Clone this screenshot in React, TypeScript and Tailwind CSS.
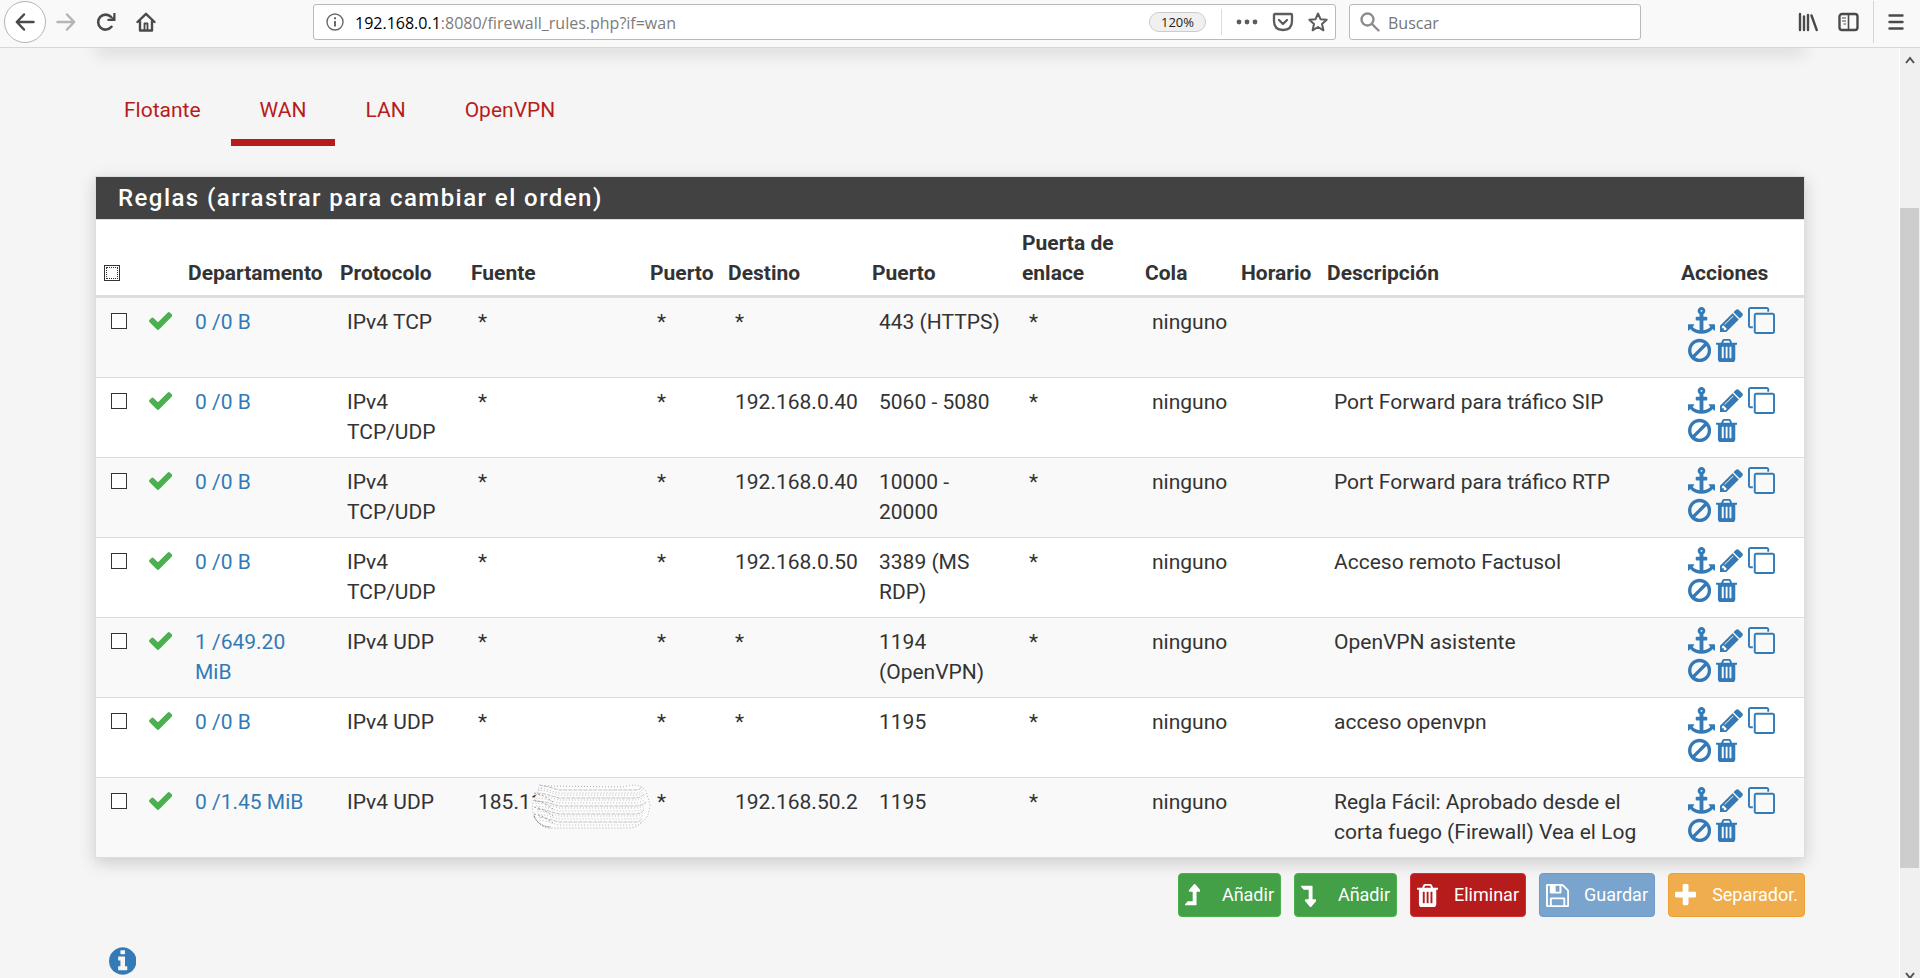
import React from "react";

type Shape = { x: number; w: number; d: string };

const shapes = {
  anchor: { x: 0, w: 1792, d: "M960 256q0-26-19-45t-45-19-45 19-19 45 19 45 45 19 45-19 19-45zm832 928v352q0 22-20 30-8 2-12 2-13 0-23-9l-93-93q-119 143-318.500 226.500t-429.500 83.500-429.500-83.500-318.500-226.500l-93 93q-9 9-23 9-4 0-12-2-20-8-20-30v-352q0-14 9-23t23-9h352q22 0 30 20 8 19-7 35l-100 100q67 91 189.500 153.500t271.500 82.500v-647h-192q-26 0-45-19t-19-45v-128q0-26 19-45t45-19h192v-163q-58-34-93-92.500t-35-128.500q0-106 75-181t181-75 181 75 75 181q0 70-35 128.500t-93 92.500v163h192q26 0 45 19t19 45v128q0 26-19 45t-45 19h-192v647q149-20 271.500-82.500t189.500-153.500l-100-100q-15-16-7-35 8-20 30-20h352q14 0 23 9t9 23z" },
  pencil: { x: 128, w: 1536, d: "M491 1536l91-91-235-235-91 91v107h128v128h107zm523-928q0-22-22-22-10 0-17 7l-542 542q-7 7-7 17 0 22 22 22 10 0 17-7l542-542q7-7 7-17zm-54-192l416 416-832 832h-416v-416zm683 96q0 53-37 90l-166 166-416-416 166-165q36-38 90-38 53 0 91 38l235 234q37 39 37 91z" },
  clone: { x: 0, w: 1792, d: "M1664 1632v-1088q0-13-9.500-22.500t-22.500-9.500h-1088q-13 0-22.500 9.500t-9.500 22.500v1088q0 13 9.500 22.500t22.500 9.500h1088q13 0 22.500-9.500t9.500-22.500zm128-1088v1088q0 66-47 113t-113 47h-1088q-66 0-113-47t-47-113v-1088q0-66 47-113t113-47h1088q66 0 113 47t47 113zm-384-384v160h-128v-160q0-13-9.500-22.500t-22.500-9.500h-1088q-13 0-22.500 9.500t-9.500 22.500v1088q0 13 9.500 22.500t22.500 9.500h160v128h-160q-66 0-113-47t-47-113v-1088q0-66 47-113t113-47h1088q66 0 113 47t47 113z" },
  ban: { x: 128, w: 1536, d: "M1440 893q0-161-87-295l-754 753q137 89 297 89 111 0 211.500-43.500t173.500-116.500 116-174.500 43-212.500zm-999 299l755-754q-135-91-300-91-148 0-273 73t-198 199-73 274q0 162 89 299zm1223-299q0 157-61 300t-163.500 246-245 164-298.500 61-298.500-61-245-164-163.500-246-61-300 61-299.500 163.500-245.500 245-164 298.500-61 298.500 61 245 164 163.500 245.500 61 299.500z" },
  trash: { x: 192, w: 1408, d: "M704 1376v-704q0-14-9-23t-23-9h-64q-14 0-23 9t-9 23v704q0 14 9 23t23 9h64q14 0 23-9t9-23zm256 0v-704q0-14-9-23t-23-9h-64q-14 0-23 9t-9 23v704q0 14 9 23t23 9h64q14 0 23-9t9-23zm256 0v-704q0-14-9-23t-23-9h-64q-14 0-23 9t-9 23v704q0 14 9 23t23 9h64q14 0 23-9t9-23zm-544-992h448l-48-117q-7-9-17-11h-317q-10 2-17 11zm928 32v64q0 14-9 23t-23 9h-96v948q0 83-47 143.500t-113 60.500h-832q-66 0-113-58.500t-47-141.500v-952h-96q-14 0-23-9t-9-23v-64q0-14 9-23t23-9h309l70-167q15-37 54-63t79-26h320q40 0 79 26t54 63l70 167h309q14 0 23 9t9 23z" },
  check: { x: 121, w: 1550, d: "M1671 566q0 40-28 68l-724 724-136 136q-28 28-68 28t-68-28l-136-136-362-362q-28-28-28-68t28-68l136-136q28-28 68-28t68 28l294 295 656-657q28-28 68-28t68 28l136 136q28 28 28 68z" },
  plus: { x: 192, w: 1408, d: "M1600 736v192q0 40-28 68t-68 28h-416v416q0 40-28 68t-68 28h-192q-40 0-68-28t-28-68v-416h-416q-40 0-68-28t-28-68v-192q0-40 28-68t68-28h416v-416q0-40 28-68t68-28h192q40 0 68 28t28 68v416h416q40 0 68 28t28 68z" },
  save: { x: 128, w: 1536, d: "M512 1536h768v-384h-768v384zm896 0h128v-896q0-14-10-38.500t-20-34.500l-281-281q-10-10-34-20t-39-10v416q0 40-28 68t-68 28h-576q-40 0-68-28t-28-68v-416h-128v1280h128v-416q0-40 28-68t68-28h832q40 0 68 28t28 68v416zm-384-928v-320q0-13-9.500-22.500t-22.500-9.500h-192q-13 0-22.500 9.500t-9.500 22.500v320q0 13 9.500 22.500t22.500 9.500h192q13 0 22.500-9.500t9.500-22.500zm640 32v928q0 40-28 68t-68 28h-1344q-40 0-68-28t-28-68v-1344q0-40 28-68t68-28h928q40 0 88 20t76 48l280 280q28 28 48 76t20 88z" },
  up: { x: 384, w: 1024, d: "M1400 603q-18 37-58 37h-192v864q0 14-9 23t-23 9h-704q-21 0-29-18-8-20 4-35l160-192q9-11 25-11h320v-640h-192q-40 0-58-37-17-37 9-68l320-384q18-22 49-22t49 22l320 384q27 32 9 68z" },
  down: { x: 384, w: 1024, d: "M414 256h704q14 0 23 9t9 23v864h192q40 0 58 37t-9 69l-320 384q-18 22-49 22t-49-22l-320-384q-26-31-9-69 18-37 58-37h192v-640h-320q-14 0-25-11l-160-192q-13-14-4-34 9-19 29-19z" },
  info: { x: 128, w: 1536, d: "M1152 1376v-160q0-14-9-23t-23-9h-96v-512q0-14-9-23t-23-9h-320q-14 0-23 9t-9 23v160q0 14 9 23t23 9h96v320h-96q-14 0-23 9t-9 23v160q0 14 9 23t23 9h448q14 0 23-9t9-23zm-128-896v-160q0-14-9-23t-23-9h-192q-14 0-23 9t-9 23v160q0 14 9 23t23 9h192q14 0 23-9t9-23zm640 416q0 209-103 385.500t-279.500 279.500-385.500 103-385.500-103-279.500-279.500-103-385.500 103-385.500 279.500-279.500 385.500-103 385.500 103 279.500 279.500 103 385.500z" },
} satisfies Record<string, Shape>;

type IconName = keyof typeof shapes;

function Icon({ name, className = "h-[27px]" }: { name: IconName; className?: string }) {
  const s = shapes[name];
  return (
    <svg viewBox={`${s.x} 0 ${s.w} 1792`} className={`${className} w-auto shrink-0 fill-current`} aria-hidden="true">
      <path d={s.d} />
    </svg>
  );
}

type Rule = {
  states: string;
  protocol: string;
  source: string;
  destination: string;
  port: string;
  description: string;
  masked?: boolean;
};

const rules: Rule[] = [
  { states: "0 /0 B", protocol: "IPv4 TCP", source: "*", destination: "*", port: "443 (HTTPS)", description: "" },
  { states: "0 /0 B", protocol: "IPv4\nTCP/UDP", source: "*", destination: "192.168.0.40", port: "5060 - 5080", description: "Port Forward para tráfico SIP" },
  { states: "0 /0 B", protocol: "IPv4\nTCP/UDP", source: "*", destination: "192.168.0.40", port: "10000 -\n20000", description: "Port Forward para tráfico RTP" },
  { states: "0 /0 B", protocol: "IPv4\nTCP/UDP", source: "*", destination: "192.168.0.50", port: "3389 (MS\nRDP)", description: "Acceso remoto Factusol" },
  { states: "1 /649.20\nMiB", protocol: "IPv4 UDP", source: "*", destination: "*", port: "1194\n(OpenVPN)", description: "OpenVPN asistente" },
  { states: "0 /0 B", protocol: "IPv4 UDP", source: "*", destination: "*", port: "1195", description: "acceso openvpn" },
  { states: "0 /1.45 MiB", protocol: "IPv4 UDP", source: "185.11", destination: "192.168.50.2", port: "1195", description: "Regla Fácil: Aprobado desde el corta fuego (Firewall) Vea el Log", masked: true },
];

const tabs = ["Flotante", "WAN", "LAN", "OpenVPN"];

function Scribble() {
  const rows = [7, 10, 12, 15, 17, 20, 23, 25, 28, 31, 33, 36, 39, 42];
  return (
    <svg viewBox="0 0 120 46" className="absolute -top-1 left-[53px] h-[46px] w-[120px]" fill="none" aria-hidden="true">
      <path d="M14 3 L92 3 Q108 -1 115 8 L119 22 Q118 34 112 38 Q106 45 98 45 L16 45 Q6 42 2 30 Q0 22 4 14 Q7 6 14 3Z" fill="#fcfcfc" />
      <path d="M14 3 L92 4 Q108 -1 115 8 L119 22 Q118 34 112 38 Q106 45 98 45 L16 45 Q6 42 2 30 Q0 22 4 14 Q7 6 14 3Z" stroke="#aaa" strokeDasharray="1 2" />
      {rows.map((y, i) => (
        <path
          key={y}
          d={`M${4 + Math.abs(y - 23) / 4} ${y - 5} L14 ${y - 4} L28 ${y} H104 Q110 ${y} ${115 - Math.abs(y - 23) / 4} ${y - 4}`}
          stroke={i % 3 === 0 ? "#c0c0c0" : "#bdbdbd"}
          strokeDasharray={i % 3 === 0 ? "4 1" : "1 2"}
        />
      ))}
      {[10, 17, 24, 31].map((y) => (
        <path key={y} d={`M3 ${y} L11 ${y + 2} L22 ${y + 9}`} stroke="#a0a0a0" strokeDasharray="2 2" />
      ))}
      <path d="M3 33 Q8 44 20 44" stroke="#777" strokeDasharray="2 1" />
    </svg>
  );
}

const box = "block size-4 appearance-none border border-[#333] bg-white";
const cell = "border-b border-[#ddd] pt-[9px] pl-[15px] align-top whitespace-pre-line";
const head = "border-b-[3px] border-[#ddd] pt-2 pb-[7px] pl-2 text-left align-bottom font-bold";

function RuleRow({ rule, index }: { rule: Rule; index: number }) {
  return (
    <tr className="h-20 odd:bg-[#f9f9f9] even:bg-white">
      <td className={cell}>
        <label className="flex h-7 items-center">
          <input type="checkbox" className={box} aria-label={`Seleccionar regla ${index + 1}`} />
        </label>
      </td>
      <td className={cell}>
        <span className="flex h-[26px] items-center text-[#4caf50]">
          <Icon name="check" />
        </span>
      </td>
      <td className={cell}>
        <a href="#estados" className="text-[#337ab7]">{rule.states}</a>
      </td>
      <td className={cell}>{rule.protocol}</td>
      <td className={cell}>
        <div className="relative">
          {rule.source}
          {rule.masked && <Scribble />}
        </div>
      </td>
      <td className={cell}>*</td>
      <td className={cell}>{rule.destination}</td>
      <td className={cell}>{rule.port}</td>
      <td className={cell}>*</td>
      <td className={cell}>ninguno</td>
      <td className={cell} />
      <td className={`${cell} pr-2`}>{rule.description}</td>
      <td className={`${cell} text-[#337ab7]`}>
        <div className="grid gap-1">
          <div className="flex h-[26px] items-center gap-[5px]">
            <a href="#mover" aria-label="Mover"><Icon name="anchor" /></a>
            <a href="#editar" aria-label="Editar"><Icon name="pencil" /></a>
            <a href="#copiar" aria-label="Copiar"><Icon name="clone" /></a>
          </div>
          <div className="flex h-[26px] items-center gap-[5px]">
            <a href="#deshabilitar" aria-label="Deshabilitar"><Icon name="ban" /></a>
            <a href="#borrar" aria-label="Borrar"><Icon name="trash" /></a>
          </div>
        </div>
      </td>
    </tr>
  );
}

function Toolbar() {
  const line = "fill-none stroke-current";
  return (
    <header className="flex h-12 items-center border-b border-[#d8d8d8] bg-[#f9f9fa] pb-1 pl-1 text-[#4a4a4b]">
      <button aria-label="Atrás" className="flex size-[42px] items-center justify-center rounded-full border border-[#b5b5b5] bg-white">
        <svg viewBox="0 0 20 20" className={`size-5 ${line}`} strokeWidth="2.500" strokeLinecap="round" strokeLinejoin="round"><path d="M18.500 10H2M9 2.500L1.800 10L9 17.500" /></svg>
      </button>
      <button aria-label="Adelante" className="flex w-10 justify-center text-[#b5b5b6]">
        <svg viewBox="0 0 20 20" className={`size-5 ${line}`} strokeWidth="2.500" strokeLinecap="round" strokeLinejoin="round"><path d="M1.500 10H18M11 2.500L18.200 10L11 17.500" /></svg>
      </button>
      <button aria-label="Recargar" className="flex w-10 justify-center">
        <svg viewBox="0 0 20 20" className={`size-5 ${line}`} strokeWidth="2.600"><path d="M15.500 14.800A7.500 7.500 0 1 1 15 4.800" strokeLinecap="round" /><path d="M19.500 1V9H11.500V6.800H15L17.300 4.500V1Z" className="fill-current stroke-none" /></svg>
      </button>
      <button aria-label="Inicio" className="flex w-10 justify-center">
        <svg viewBox="0 0 20 20" className={`size-5 ${line}`} strokeWidth="2.400" strokeLinejoin="round" strokeLinecap="round"><path d="M1.500 10L10 1.800L18.500 10M4 9V18.500H16V9" /><path d="M8.500 18V11.500H11.500V18" strokeWidth="1.800" /></svg>
      </button>
      <div className="w-[147px]" />
      <div className="flex h-9 min-w-0 flex-1 items-center rounded-[3px] border border-[#b9b9b9] bg-white pr-[7px] pl-3">
        <svg viewBox="0 0 18 18" className={`size-[18px] text-[#6a6a6a] ${line}`} strokeWidth="1.400"><circle cx="9" cy="9" r="8" /><path d="M9 8V13.500M9 4.300V6.300" strokeWidth="2" /></svg>
        <a href="#direccion" className="ml-[11px] flex-1 pt-[3px] font-['Open_Sans',sans-serif] text-base text-[#7c7c7c]">
          <span className="text-black">192.168.0.1</span>:8080/firewall_rules.php?if=wan
        </a>
        <button className="h-5 w-[57px] rounded-full border border-[#ccc] bg-[#f0f0f0] font-['Open_Sans',sans-serif] text-[13px] leading-4 text-[#222]">120%</button>
        <div className="mr-[14px] ml-[15px] h-[26px] w-px bg-[#dcdcdc]" />
        <div className="flex items-center gap-[14px] text-[#5c5c5d]">
          <button aria-label="Acciones de página"><svg viewBox="0 0 22 20" className="h-5 w-[22px] fill-current"><circle cx="3" cy="10" r="2.400" /><circle cx="11" cy="10" r="2.400" /><circle cx="19" cy="10" r="2.400" /></svg></button>
          <button aria-label="Pocket"><svg viewBox="0 0 22 20" className={`h-5 w-[22px] ${line}`} strokeWidth="2.300" strokeLinejoin="round" strokeLinecap="round"><path d="M3 2H19Q20 2 20 3V9Q20 18 11 18Q2 18 2 9V3Q2 2 3 2Z" /><path d="M7 8L11 12L15 8" /></svg></button>
          <button aria-label="Marcador"><svg viewBox="0 0 20 20" className={`size-5 ${line}`} strokeWidth="2" strokeLinejoin="round"><path d="M10 1.500L12.500 7.200L18.700 7.800L14 12L15.400 18.300L10 15L4.600 18.300L6 12L1.300 7.800L7.500 7.200Z" /></svg></button>
        </div>
      </div>
      <div className="ml-[13px] flex h-9 w-[292px] items-center rounded-[3px] border border-[#b9b9b9] bg-white px-[10px]">
        <svg viewBox="0 0 20 20" className={`size-5 text-[#8c8c8c] ${line}`} strokeWidth="2.400" strokeLinecap="round"><circle cx="7.500" cy="7.500" r="6" /><path d="M12 12L18.500 18.500" /></svg>
        <input aria-label="Buscar" placeholder="Buscar" className="ml-2 min-w-0 flex-1 pt-[3px] font-['Open_Sans',sans-serif] text-base outline-none placeholder:text-[#757575]" />
      </div>
      <div className="w-[157px]" />
      <button aria-label="Biblioteca" className="mr-5"><svg viewBox="0 0 20 20" className={`size-5 ${line}`} strokeWidth="2.400" strokeLinecap="round"><path d="M2 2V18M6 4.500V18M10 3V18M13.500 3.500L18.700 18" /></svg></button>
      <button aria-label="Barra lateral"><svg viewBox="0 0 21 20" className={`h-5 w-[21px] ${line}`} strokeWidth="2.400"><rect x="1.500" y="2" width="18" height="16" rx="2.500" /><path d="M10.500 2V18" strokeWidth="1.600" /><path d="M4 6H8M4 9H8M5.500 12H8" strokeWidth="1.200" /></svg></button>
      <div className="mx-[14px] h-[42px] w-px bg-[#d5d5d5]" />
      <button aria-label="Menú" className="mr-4 w-[16px]"><svg viewBox="0 0 16 18" className={`h-[18px] w-4 ${line}`} strokeWidth="2.400" strokeLinecap="round"><path d="M1.500 2.500H14.500M1.500 9H14.500M1.500 15.500H14.500" /></svg></button>
    </header>
  );
}

function ActionButton({ icon, label, tone }: { icon: IconName; label: string; tone: string }) {
  return (
    <button className={`flex h-11 items-center justify-between rounded border px-[6px] text-lg text-white ${tone}`}>
      <Icon name={icon} />
      {label}
    </button>
  );
}

export default function App() {
  return (
    <div className="flex min-h-screen flex-col bg-[#f5f5f5] font-[Roboto,sans-serif] text-[21px] leading-[30px] text-[#333]">
      <Toolbar />
      <div className="flex flex-1">
        <main className="min-w-0 flex-1 overflow-hidden pr-[94px] pl-[95px]">
          <div className="-mt-2 h-2 shadow-[0_5px_16px_rgba(0,0,0,0.17)]" />
          <nav className="mt-[47px] flex gap-px">
            {tabs.map((tab) => (
              <a
                key={tab}
                href={`#${tab}`}
                className={`border-b-[7px] px-[29px] pb-[14px] text-[#b71c1c] ${tab === "WAN" ? "border-[#b71c1c]" : "border-transparent"}`}
              >
                {tab}
              </a>
            ))}
          </nav>
          <section className="mt-[30px] border border-b-0 border-[#ddd] bg-white shadow-[0_5px_16px_rgba(0,0,0,0.17)]">
            <h2 className="border-b border-[#ddd] bg-[#424242] py-[6px] pl-[22px] text-2xl leading-[30px] font-medium tracking-[0.06em] text-white">
              Reglas (arrastrar para cambiar el orden)
            </h2>
            <table className="w-full table-fixed border-separate border-spacing-0">
              <colgroup>
                <col className="w-[38px]" />
                <col className="w-[46px]" />
                <col className="w-[152px]" />
                <col className="w-[131px]" />
                <col className="w-[179px]" />
                <col className="w-[78px]" />
                <col className="w-[144px]" />
                <col className="w-[150px]" />
                <col className="w-[123px]" />
                <col className="w-[96px]" />
                <col className="w-[86px]" />
                <col />
                <col className="w-[131px]" />
              </colgroup>
              <thead>
                <tr>
                  <th className={head}>
                    <label className="flex h-[30px] items-center">
                      <input
                        type="checkbox"
                        aria-label="Seleccionar todas"
                        className="block size-4 appearance-none border border-[#333] bg-white outline-1 -outline-offset-3 outline-dotted outline-[#333]"
                      />
                    </label>
                  </th>
                  <th className={head} />
                  <th className={head}>Departamento</th>
                  <th className={head}>Protocolo</th>
                  <th className={head}>Fuente</th>
                  <th className={head}>Puerto</th>
                  <th className={head}>Destino</th>
                  <th className={head}>Puerto</th>
                  <th className={head}>Puerta de enlace</th>
                  <th className={head}>Cola</th>
                  <th className={head}>Horario</th>
                  <th className={head}>Descripción</th>
                  <th className={head}>Acciones</th>
                </tr>
              </thead>
              <tbody>
                {rules.map((rule, index) => (
                  <RuleRow key={index} rule={rule} index={index} />
                ))}
              </tbody>
            </table>
          </section>
          <div className="mt-[15px] flex justify-end gap-[13px]">
            <ActionButton icon="up" label="Añadir" tone="w-[103px] border-[#4caf50] bg-[#43a047]" />
            <ActionButton icon="down" label="Añadir" tone="w-[103px] border-[#4caf50] bg-[#43a047]" />
            <ActionButton icon="trash" label="Eliminar" tone="w-[116px] border-[#d32f2f] bg-[#b71c1c]" />
            <ActionButton icon="save" label="Guardar" tone="w-[116px] border-[#6d9bc5] bg-[#78a4cd]" />
            <ActionButton icon="plus" label="Separador." tone="w-[137px] border-[#eea236] bg-[#f0ad4e]" />
          </div>
          <button aria-label="Información" className="mt-7 ml-[14px] block text-[#337ab7]">
            <Icon name="info" className="h-8" />
          </button>
        </main>
        <aside className="flex w-[21px] flex-col border-l border-white bg-[#f0f0f0] text-[#505050]">
          <button aria-label="Subir" className="flex h-6 items-center justify-center">
            <svg viewBox="0 0 10 8" className="h-2 w-[10px] fill-none stroke-current" strokeWidth="2"><path d="M1 7L5 2L9 7" /></svg>
          </button>
          <div className="grow-136 basis-0" />
          <div className="mr-px grow-660 basis-0 bg-[#cdcdcd]" />
          <div className="grow-104 basis-0" />
          <button aria-label="Bajar" className="flex h-[6px] justify-center">
            <svg viewBox="0 0 10 8" className="h-2 w-[10px] fill-none stroke-current" strokeWidth="2"><path d="M1 1L5 6L9 1" /></svg>
          </button>
        </aside>
      </div>
    </div>
  );
}
